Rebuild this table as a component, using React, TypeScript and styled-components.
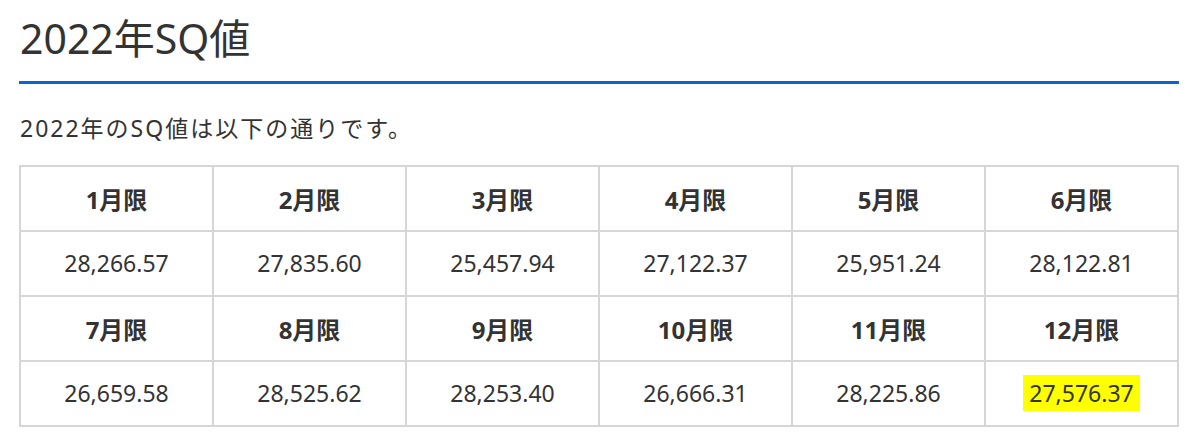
import React from "react";
import styled, { createGlobalStyle } from "styled-components";

const Global = createGlobalStyle`
  html, body { margin: 0; padding: 0; background: #fff; }
  body { font-family: "Noto Sans", "Noto Sans CJK JP", sans-serif; color: #333; }
`;

const Page = styled.div`
  padding: 0 21px 0 19px;
`;

const Title = styled.h2`
  margin: 0;
  padding: 12px 0 16px 1px;
  font-size: 41px;
  font-weight: 400;
  line-height: 1.3;
  color: #333;
  border-bottom: 3px solid #0866d4;
`;

const Lead = styled.p`
  margin: 0;
  padding: 27px 0 19px 1px;
  font-size: 23px;
  line-height: 1.5;
  letter-spacing: 2px;
`;

const Table = styled.table`
  width: 100%;
  border-collapse: collapse;
  table-layout: fixed;
  border: 2px solid #d6d6d6;
`;

const Cell = styled.td<{ $head?: boolean }>`
  border: 2px solid #d6d6d6;
  text-align: center;
  height: 63px;
  padding: 0;
  font-size: ${(p) => (p.$head ? "24px" : "23px")};
  font-weight: ${(p) => (p.$head ? 700 : 400)};
  color: #333;
`;

const Mark = styled.span`
  background: #ffff00;
  padding: 2px 6px;
`;

const rows: { head: string[]; vals: string[] }[] = [
  {
    head: ["1月限", "2月限", "3月限", "4月限", "5月限", "6月限"],
    vals: ["28,266.57", "27,835.60", "25,457.94", "27,122.37", "25,951.24", "28,122.81"],
  },
  {
    head: ["7月限", "8月限", "9月限", "10月限", "11月限", "12月限"],
    vals: ["26,659.58", "28,525.62", "28,253.40", "26,666.31", "28,225.86", "27,576.37"],
  },
];

export default function App() {
  return (
    <Page>
      <Global />
      <Title>2022年SQ値</Title>
      <Lead>2022年のSQ値は以下の通りです。</Lead>
      <Table>
        <tbody>
          {rows.map((r, ri) => (
            <React.Fragment key={ri}>
              <tr>
                {r.head.map((h) => (
                  <Cell as="th" $head key={h}>{h}</Cell>
                ))}
              </tr>
              <tr>
                {r.vals.map((v, i) => (
                  <Cell key={v}>
                    {ri === 1 && i === 5 ? <Mark>{v}</Mark> : v}
                  </Cell>
                ))}
              </tr>
            </React.Fragment>
          ))}
        </tbody>
      </Table>
    </Page>
  );
}
